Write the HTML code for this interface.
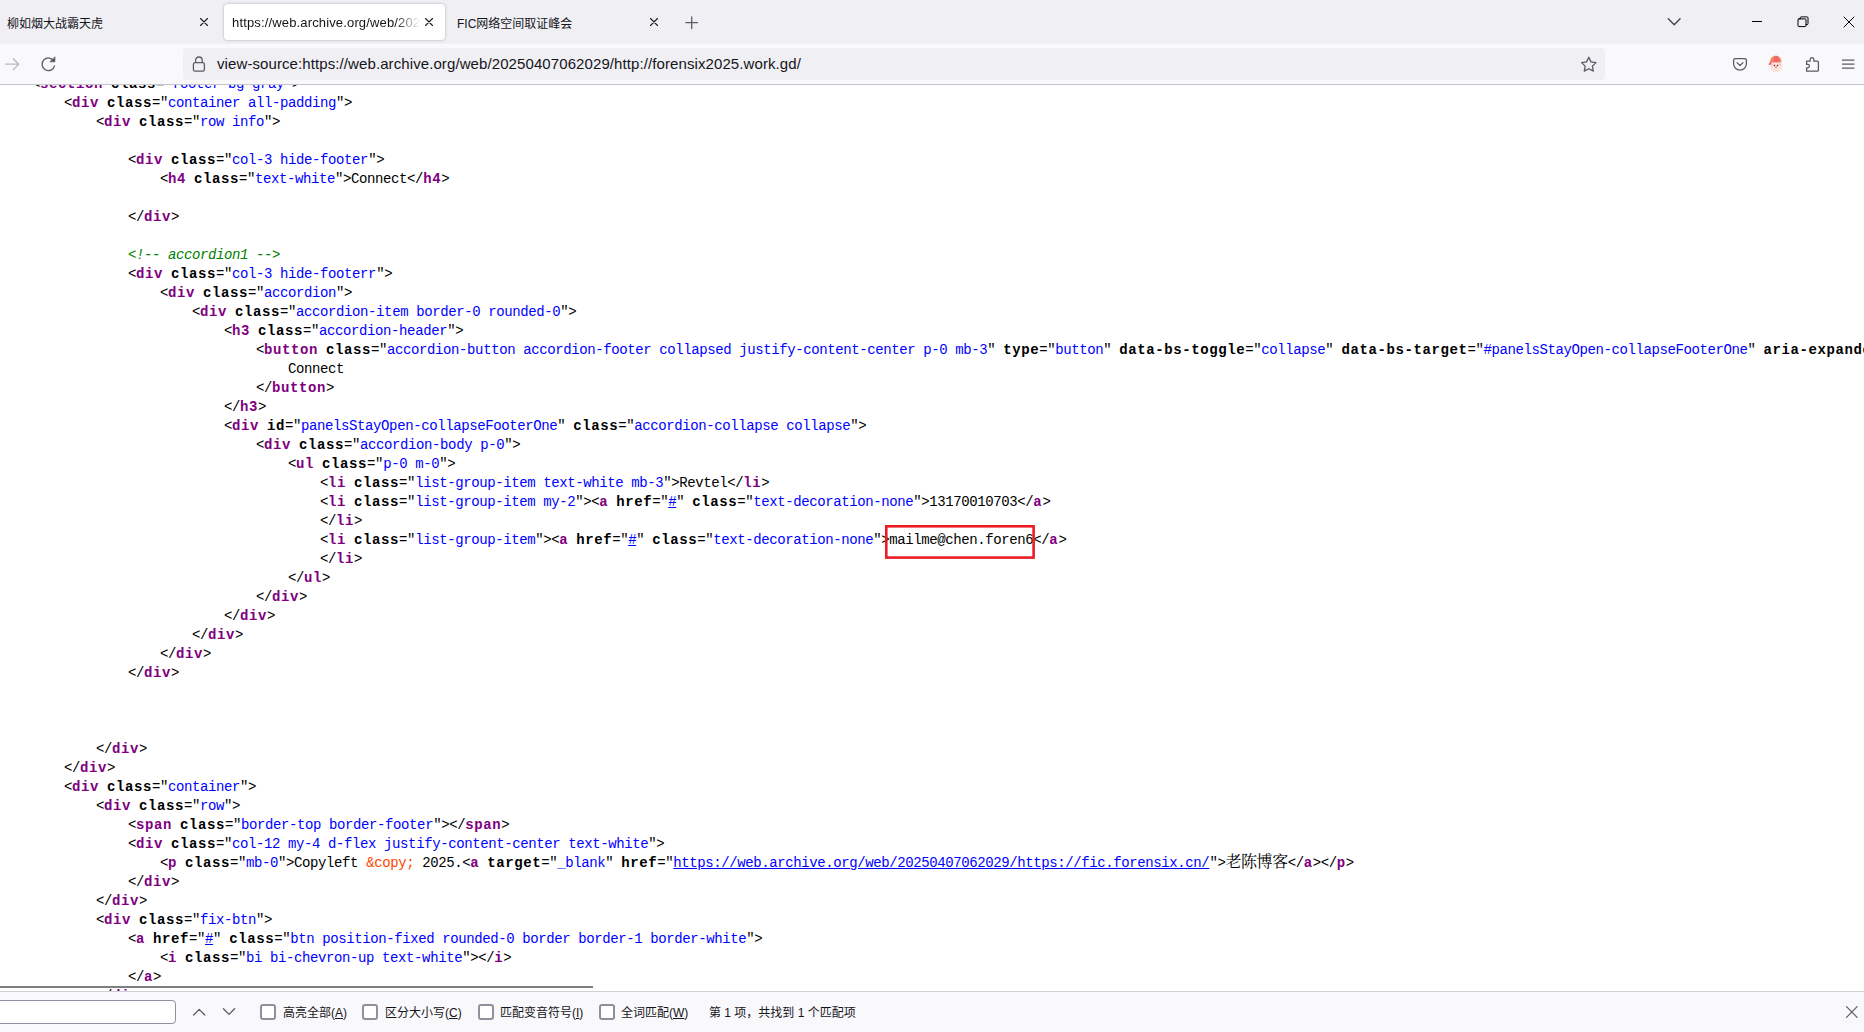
<!DOCTYPE html>
<html lang="zh-CN">
<head>
<meta charset="utf-8">
<title>view-source</title>
<style>
*{box-sizing:border-box;margin:0;padding:0}
html,body{width:1864px;height:1032px;overflow:hidden;background:#fff}
body{position:relative;font-family:"Liberation Sans","Noto Sans CJK SC",sans-serif;color:#15141a}
.abs{position:absolute}
#tabbar{left:0;top:0;width:1864px;height:44px;background:#f0f0f4}
#navbar{left:0;top:44px;width:1864px;height:41px;background:#f9f9fb;border-bottom:1px solid #c4c4cc}
#urlbar{left:183px;top:48px;width:1422px;height:32px;background:#f0f0f4;border-radius:4px}
#acttab{left:224px;top:4px;width:221px;height:36px;background:#fff;border-radius:4px;box-shadow:0 0 3px rgba(0,0,0,.28)}
.tabtxt{font-size:12px;line-height:16px;top:16px;white-space:nowrap;color:#15141a}
#urltxt{left:217px;top:54px;letter-spacing:.094px;font-size:15px;line-height:20px;white-space:nowrap;color:#15141a}
#src{left:0;top:85px;width:1864px;height:906px;overflow:hidden;background:#fff}
pre{position:absolute;left:0px;top:-10px;font-family:"Liberation Mono","Noto Sans CJK SC",monospace;font-size:14px;letter-spacing:-0.4px;line-height:19px;color:#000;white-space:pre}
pre b{letter-spacing:0.6px;font-weight:bold}
.t{color:#800080}
.v{color:#0000ff}
.c{color:#008000;font-style:italic}
.e{color:#ff4500}
.u{text-decoration:underline}
.cj{font-family:"Liberation Mono","Noto Serif CJK SC",serif;font-size:16px;line-height:0}
#hscroll{left:0;top:986px;width:593px;height:2px;background:#7f7f7f}
#findbar{left:0;top:991px;width:1864px;height:41px;background:#f9f9fb;border-top:1px solid #d0d0d6}
#finput{left:-10px;top:1000px;width:186px;height:24px;background:#fff;border:1px solid #8f8f9d;border-radius:4px}
.cb{width:16px;height:16px;top:1004px;border:2px solid #8f8f9d;border-radius:3px;background:#fff}
.fl{font-size:12px;line-height:16px;top:1005px;white-space:nowrap;color:#15141a}
#redbox{left:885px;top:525px;width:150px;height:34px;border:2px solid #ed1c24}
</style>
</head>
<body>
<div id="tabbar" class="abs"></div>
<div id="acttab" class="abs"></div>
<div class="abs tabtxt" style="left:7px">柳如烟大战霸天虎</div>
<div class="abs tabtxt" style="left:232px;top:15px;width:189px;overflow:hidden;font-size:13px;letter-spacing:.15px;-webkit-mask-image:linear-gradient(to right,#000 163px,transparent 188px);mask-image:linear-gradient(to right,#000 163px,transparent 188px)">https://web.archive.org/web/20250407062029</div>
<div class="abs tabtxt" style="left:457px">FIC网络空间取证峰会</div>
<div id="navbar" class="abs"></div>
<div id="urlbar" class="abs"></div>
<div id="urltxt" class="abs">view-source:https://web.archive.org/web/20250407062029/http://forensix2025.work.gd/</div>

<!-- tab strip icons -->
<svg class="abs" style="left:0;top:0" width="1864" height="85" viewBox="0 0 1864 85" fill="none" stroke-linecap="round" stroke-linejoin="round">
 <g stroke="#1c1b22" stroke-width="1.1">
  <path d="M200.5 18.5l7 7M207.5 18.5l-7 7"/>
  <path d="M425.5 18.5l7 7M432.5 18.5l-7 7"/>
  <path d="M650.5 18.5l7 7M657.5 18.5l-7 7"/>
  <path d="M685.9 22.7h11.6M691.7 16.9v11.6" stroke="#5b5b66" stroke-width="1.3"/>
 </g>
 <path d="M1668.3 18.8l5.9 5.9l5.9-5.9" stroke="#3e3e46" stroke-width="1.3"/>
 <g stroke="#000" stroke-width="1">
  <path d="M1752 21.5h10" stroke-linecap="butt"/>
  <rect x="1798" y="18.9" width="8" height="7.7" rx="1"/>
  <path d="M1800.2 18.9v-1a1 1 0 0 1 1-1h5.8a1 1 0 0 1 1 1v5.8a1 1 0 0 1-1 1h-1"/>
  <path d="M1844 17l10 10M1854 17l-10 10"/>
 </g>
 <!-- nav bar -->
 <g stroke="#b9b9bf" stroke-width="1.3">
  <path d="M5.5 64.2h13M13.3 58.8l5.4 5.4l-5.4 5.4"/>
 </g>
 <g stroke="#5b5b66" stroke-width="1.3">
  <path d="M53.9 61.2a6.3 6.3 0 1 0 0.6 4.6"/>
  <path d="M54.9 57.2v4.6h-4.6z" fill="#5b5b66" stroke-width="0.8"/>
 </g>
 <g stroke="#5b5b66" stroke-width="1.3">
  <rect x="193.4" y="62.6" width="11" height="8.6" rx="1.8"/>
  <path d="M195.6 62.4v-2.1a3.3 3.3 0 0 1 6.6 0v2.1"/>
 </g>
 <path d="M1588.8 57.3l2.2 4.6l5 .7l-3.6 3.5l.9 5l-4.5-2.4l-4.5 2.4l.9-5l-3.6-3.5l5-.7z" stroke="#5b5b66" stroke-width="1.3"/>
 <g stroke="#5b5b66" stroke-width="1.3">
  <path d="M1735.2 58.6h9.6a1.6 1.6 0 0 1 1.6 1.6v3.6a6.4 6.4 0 0 1-12.8 0v-3.6a1.6 1.6 0 0 1 1.6-1.6z"/>
  <path d="M1737 62.6l3 2.9l3-2.9"/>
 </g>
 <g stroke="#5b5b66" stroke-width="1.3">
  <path d="M1806.6 71.2v-3.4h1.1a1.7 1.7 0 0 0 0-3.4h-1.1v-3.2h3.6v-1.7a1.8 1.8 0 0 1 3.6 0v1.7h3.6a1 1 0 0 1 1 1v8a1 1 0 0 1-1 1z"/>
 </g>
 <g stroke="#5b5b66" stroke-width="1.3" stroke-linecap="butt">
  <path d="M1842 60.2h12.4M1842 64.2h12.4M1842 68.2h12.4"/>
 </g>
 <!-- avatar -->
 <g stroke="none">
  <ellipse cx="1776.2" cy="66.6" rx="6.1" ry="5.4" fill="#fbe3da"/>
  <ellipse cx="1772.6" cy="64.2" rx="1.3" ry="0.9" fill="#f9bdb5"/>
  <ellipse cx="1779.6" cy="64.2" rx="1.3" ry="0.9" fill="#f9bdb5"/>
  <path d="M1770.1 62.3c0-8.6 11.4-8.6 11.4 0z" fill="#ee8a4e"/>
  <path d="M1773.2 62.3c0-8.4 6 -8.4 6 0z" fill="#f4627c"/>
  <path d="M1770.6 61.4l-2.4 3.2l2.3 0.3l1.6-3z" fill="#ec5f78"/>
  <circle cx="1774.5" cy="65.4" r="0.75" fill="#5a2228"/>
  <circle cx="1777.5" cy="65.4" r="0.75" fill="#5a2228"/>
  <ellipse cx="1776" cy="67.2" rx="0.8" ry="0.6" fill="#a4505a"/>
  <ellipse cx="1776" cy="66" rx="1.1" ry="1.2" fill="#efc4c4" opacity=".7"/>
 </g>
</svg>
<div id="src" class="abs"><pre id="code">    &lt;<b class="t">section</b> <b>class</b>="<span class="v">footer bg-gray</span>"&gt;
        &lt;<b class="t">div</b> <b>class</b>="<span class="v">container all-padding</span>"&gt;
            &lt;<b class="t">div</b> <b>class</b>="<span class="v">row info</span>"&gt;

                &lt;<b class="t">div</b> <b>class</b>="<span class="v">col-3 hide-footer</span>"&gt;
                    &lt;<b class="t">h4</b> <b>class</b>="<span class="v">text-white</span>"&gt;Connect&lt;/<b class="t">h4</b>&gt;

                &lt;/<b class="t">div</b>&gt;

                <span class="c">&lt;!-- accordion1 --&gt;</span>
                &lt;<b class="t">div</b> <b>class</b>="<span class="v">col-3 hide-footerr</span>"&gt;
                    &lt;<b class="t">div</b> <b>class</b>="<span class="v">accordion</span>"&gt;
                        &lt;<b class="t">div</b> <b>class</b>="<span class="v">accordion-item border-0 rounded-0</span>"&gt;
                            &lt;<b class="t">h3</b> <b>class</b>="<span class="v">accordion-header</span>"&gt;
                                &lt;<b class="t">button</b> <b>class</b>="<span class="v">accordion-button accordion-footer collapsed justify-content-center p-0 mb-3</span>" <b>type</b>="<span class="v">button</span>" <b>data-bs-toggle</b>="<span class="v">collapse</span>" <b>data-bs-target</b>="<span class="v">#panelsStayOpen-collapseFooterOne</span>" <b>aria-expanded</b>="<span class="v">false</span>" <b>aria-controls</b>="<span class="v">panelsStayOpen-collapseFooterOne</span>"&gt;
                                    Connect
                                &lt;/<b class="t">button</b>&gt;
                            &lt;/<b class="t">h3</b>&gt;
                            &lt;<b class="t">div</b> <b>id</b>="<span class="v">panelsStayOpen-collapseFooterOne</span>" <b>class</b>="<span class="v">accordion-collapse collapse</span>"&gt;
                                &lt;<b class="t">div</b> <b>class</b>="<span class="v">accordion-body p-0</span>"&gt;
                                    &lt;<b class="t">ul</b> <b>class</b>="<span class="v">p-0 m-0</span>"&gt;
                                        &lt;<b class="t">li</b> <b>class</b>="<span class="v">list-group-item text-white mb-3</span>"&gt;Revtel&lt;/<b class="t">li</b>&gt;
                                        &lt;<b class="t">li</b> <b>class</b>="<span class="v">list-group-item my-2</span>"&gt;&lt;<b class="t">a</b> <b>href</b>="<span class="v u">#</span>" <b>class</b>="<span class="v">text-decoration-none</span>"&gt;13170010703&lt;/<b class="t">a</b>&gt;
                                        &lt;/<b class="t">li</b>&gt;
                                        &lt;<b class="t">li</b> <b>class</b>="<span class="v">list-group-item</span>"&gt;&lt;<b class="t">a</b> <b>href</b>="<span class="v u">#</span>" <b>class</b>="<span class="v">text-decoration-none</span>"&gt;mailme@chen.foren6&lt;/<b class="t">a</b>&gt;
                                        &lt;/<b class="t">li</b>&gt;
                                    &lt;/<b class="t">ul</b>&gt;
                                &lt;/<b class="t">div</b>&gt;
                            &lt;/<b class="t">div</b>&gt;
                        &lt;/<b class="t">div</b>&gt;
                    &lt;/<b class="t">div</b>&gt;
                &lt;/<b class="t">div</b>&gt;



            &lt;/<b class="t">div</b>&gt;
        &lt;/<b class="t">div</b>&gt;
        &lt;<b class="t">div</b> <b>class</b>="<span class="v">container</span>"&gt;
            &lt;<b class="t">div</b> <b>class</b>="<span class="v">row</span>"&gt;
                &lt;<b class="t">span</b> <b>class</b>="<span class="v">border-top border-footer</span>"&gt;&lt;/<b class="t">span</b>&gt;
                &lt;<b class="t">div</b> <b>class</b>="<span class="v">col-12 my-4 d-flex justify-content-center text-white</span>"&gt;
                    &lt;<b class="t">p</b> <b>class</b>="<span class="v">mb-0</span>"&gt;Copyleft <span class="e">&amp;copy;</span> 2025.&lt;<b class="t">a</b> <b>target</b>="<span class="v">_blank</span>" <b>href</b>="<span class="v u">https://web.archive.org/web/20250407062029/https://fic.forensix.cn/</span>"&gt;<span class="cj">老陈博客</span>&lt;/<b class="t">a</b>&gt;&lt;/<b class="t">p</b>&gt;
                &lt;/<b class="t">div</b>&gt;
            &lt;/<b class="t">div</b>&gt;
            &lt;<b class="t">div</b> <b>class</b>="<span class="v">fix-btn</span>"&gt;
                &lt;<b class="t">a</b> <b>href</b>="<span class="v u">#</span>" <b>class</b>="<span class="v">btn position-fixed rounded-0 border border-1 border-white</span>"&gt;
                    &lt;<b class="t">i</b> <b>class</b>="<span class="v">bi bi-chevron-up text-white</span>"&gt;&lt;/<b class="t">i</b>&gt;
                &lt;/<b class="t">a</b>&gt;
            &lt;/<b class="t">div</b>&gt;</pre></div>
<svg class="abs" style="left:880px;top:520px" width="160" height="44" viewBox="880 520 160 44"><rect x="886.3" y="526.3" width="147.3" height="31.3" fill="none" stroke="#ed1c24" stroke-width="2.6"/></svg>
<div id="hscroll" class="abs"></div>
<div id="findbar" class="abs"></div>
<div id="finput" class="abs"></div>
<svg class="abs" style="left:0;top:992px" width="1864" height="40" viewBox="0 992 1864 40" fill="none" stroke-linecap="round" stroke-linejoin="round">
 <g stroke="#5b5b66" stroke-width="1.3">
  <path d="M193.6 1015l5.6-5.6l5.6 5.6"/>
  <path d="M223.4 1008.8l5.6 5.6l5.6-5.6"/>
  <path d="M1846.5 1006.7l10.6 10.6M1857.1 1006.7l-10.6 10.6" stroke-width="1.2"/>
 </g>
</svg>
<div class="abs cb" style="left:260px"></div><div class="abs fl" style="left:283px">高亮全部(<u>A</u>)</div>
<div class="abs cb" style="left:362px"></div><div class="abs fl" style="left:385px">区分大小写(<u>C</u>)</div>
<div class="abs cb" style="left:478px"></div><div class="abs fl" style="left:500px">匹配变音符号(<u>I</u>)</div>
<div class="abs cb" style="left:599px"></div><div class="abs fl" style="left:621px">全词匹配(<u>W</u>)</div>
<div class="abs fl" style="left:709px">第 1 项，共找到 1 个匹配项</div>

</body>
</html>
